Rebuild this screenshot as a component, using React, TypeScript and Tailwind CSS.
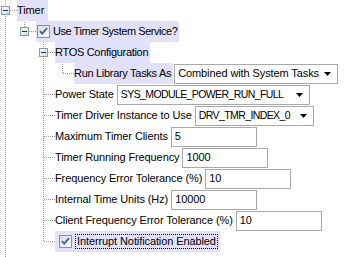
import React from "react";

const LINE = "#a0a0a0";
const ROW_H = 21;

// one column of the tree guide, 19px wide, optional vertical dotted line
const Guide = ({ on, top }: { on: boolean; top: number }) => (
  <svg width={19} height={ROW_H} className="shrink-0">
    {on && (
      <line
        x1={5.5}
        y1={0}
        x2={5.5}
        y2={ROW_H}
        stroke={LINE}
        strokeDasharray="1 1"
        strokeDashoffset={top % 2}
      />
    )}
  </svg>
);

// the node's own column: connector, and the minus box when expanded
const Own = ({
  top,
  bottom,
  expander,
}: {
  top: number;
  bottom: boolean;
  expander?: boolean;
}) => (
  <svg width={17} height={ROW_H} className="shrink-0">
    <line
      x1={5.5}
      y1={0}
      x2={5.5}
      y2={expander ? 6 : 11}
      stroke={LINE}
      strokeDasharray="1 1"
      strokeDashoffset={top % 2}
    />
    {bottom && (
      <line
        x1={5.5}
        y1={expander ? 15 : 11}
        x2={5.5}
        y2={ROW_H}
        stroke={LINE}
        strokeDasharray="1 1"
        strokeDashoffset={(top + 1) % 2}
      />
    )}
    <line
      x1={expander ? 10 : 6}
      y1={10.5}
      x2={17}
      y2={10.5}
      stroke={LINE}
      strokeDasharray="1 1"
    />
    {expander && (
      <>
        <defs>
          <linearGradient id="mbox" x1="0" y1="0" x2="1" y2="1">
            <stop offset="0" stopColor="#ffffff" />
            <stop offset="1" stopColor="#d8d8cf" />
          </linearGradient>
        </defs>
        <rect x={1.5} y={6.5} width={8} height={8} fill="url(#mbox)" stroke="#7f9db9" />
        <line x1={3} y1={10.5} x2={8} y2={10.5} stroke="#1f2f5f" />
      </>
    )}
  </svg>
);

const Check = () => (
  <svg width={13} height={13} className="shrink-0">
    <defs>
      <linearGradient id="cb" x1="0" y1="0" x2="1" y2="1">
        <stop offset="0" stopColor="#dcdcdc" />
        <stop offset="1" stopColor="#fbfbfb" />
      </linearGradient>
    </defs>
    <rect x={0.5} y={0.5} width={12} height={12} fill="url(#cb)" stroke="#8e8f8f" />
    <path
      d="M3 6.2 L5.2 8.6 L10 3.2"
      fill="none"
      stroke="#3d5ea8"
      strokeWidth={1.8}
    />
  </svg>
);

const Arrow = () => (
  <svg width={7} height={4} className="shrink-0">
    <path d="M0 0 H7 L3.5 4 Z" fill="#000" />
  </svg>
);

const Dropdown = ({
  value,
  className,
  valueClass = "",
}: {
  value: string;
  className: string;
  valueClass?: string;
}) => (
  <div
    className={`flex h-[20px] items-center border border-[#a9a9a9] bg-white pl-[3px] pr-[6px] ${className}`}
  >
    <span className={`whitespace-nowrap ${valueClass}`}>{value}</span>
    <span className="ml-auto">
      <Arrow />
    </span>
  </div>
);

const Field = ({ value }: { value: string }) => (
  <div className="ml-[3px] flex h-[20px] w-[86px] items-center border border-[#a9a9a9] bg-white pl-[3px]">
    {value}
  </div>
);

type Row = {
  guides: boolean[];
  bottom: boolean;
  expander?: boolean;
  content: React.ReactNode;
};

const hl = "flex h-full items-center bg-[#e1e1fc] pr-[2px] whitespace-nowrap";
const caps = "text-[10.5px] tracking-[-0.6px]";

const rows: Row[] = [
  {
    guides: [],
    bottom: true,
    expander: true,
    content: <div className={`${hl} pr-[4px]`}>Timer</div>,
  },
  {
    guides: [true],
    bottom: false,
    expander: true,
    content: (
      <div className={`${hl} pl-[1px]`}>
        <Check />
        <span className="ml-[3px] tracking-[-0.45px]">Use Timer System Service?</span>
      </div>
    ),
  },
  {
    guides: [true, false],
    bottom: true,
    expander: true,
    content: <div className={`${hl} tracking-[-0.3px]`}>RTOS Configuration</div>,
  },
  {
    guides: [true, false, true],
    bottom: false,
    content: (
      <>
        <div className={`${hl} tracking-[-0.3px]`}>Run Library Tasks As</div>
        <Dropdown value="Combined with System Tasks" className="ml-[1px] w-[164px]" />
      </>
    ),
  },
  {
    guides: [true, false],
    bottom: true,
    content: (
      <>
        <span className="whitespace-nowrap">Power State</span>
        <Dropdown
          value="SYS_MODULE_POWER_RUN_FULL"
          className="ml-[3px] w-[193px]"
          valueClass={caps}
        />
      </>
    ),
  },
  {
    guides: [true, false],
    bottom: true,
    content: (
      <>
        <span className="whitespace-nowrap">Timer Driver Instance to Use</span>
        <Dropdown value="DRV_TMR_INDEX_0" className="ml-[3px] w-[119px]" valueClass={caps} />
      </>
    ),
  },
  {
    guides: [true, false],
    bottom: true,
    content: (
      <>
        <span className="whitespace-nowrap">Maximum Timer Clients</span>
        <Field value="5" />
      </>
    ),
  },
  {
    guides: [true, false],
    bottom: true,
    content: (
      <>
        <span className="whitespace-nowrap">Timer Running Frequency</span>
        <Field value="1000" />
      </>
    ),
  },
  {
    guides: [true, false],
    bottom: true,
    content: (
      <>
        <span className="whitespace-nowrap">Frequency Error Tolerance (%)</span>
        <Field value="10" />
      </>
    ),
  },
  {
    guides: [true, false],
    bottom: true,
    content: (
      <>
        <span className="whitespace-nowrap">Internal Time Units (Hz)</span>
        <Field value="10000" />
      </>
    ),
  },
  {
    guides: [true, false],
    bottom: true,
    content: (
      <>
        <span className="whitespace-nowrap">Client Frequency Error Tolerance (%)</span>
        <Field value="10" />
      </>
    ),
  },
  {
    guides: [true, false],
    bottom: false,
    content: (
      <div className={`${hl} pl-[4px]`}>
        <Check />
        <span className="ml-[3px] border border-dotted border-black px-[1px] leading-[13px]">
          Interrupt Notification Enabled
        </span>
      </div>
    ),
  },
];

export default function App() {
  return (
    <div className="h-[257px] w-[345px] overflow-hidden bg-white font-['Liberation_Sans',Arial,sans-serif] text-[11px] tracking-[-0.1px] text-black">
      {rows.map((r, i) => {
        const top = i * ROW_H;
        return (
          <div key={i} className="flex h-[21px] items-center">
            {r.guides.map((g, j) => (
              <Guide key={j} on={g} top={top} />
            ))}
            <Own top={top} bottom={r.bottom} expander={r.expander} />
            <div className="flex h-full items-center">{r.content}</div>
          </div>
        );
      })}
      <svg width={19} height={5} className="block">
        <line x1={5.5} y1={0} x2={5.5} y2={5} stroke={LINE} strokeDasharray="1 1" />
      </svg>
    </div>
  );
}
